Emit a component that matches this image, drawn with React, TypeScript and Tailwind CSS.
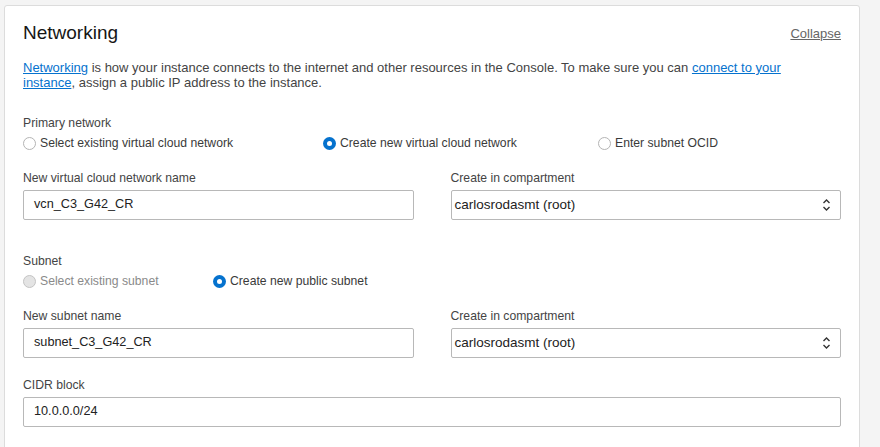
import React from 'react';

const font = { fontFamily: '"Liberation Sans", Arial, sans-serif' };

type Opt = { label: string; checked?: boolean; disabled?: boolean; w?: string };

const Radio = ({ label, checked, disabled, w }: Opt) => (
  <label className={`flex items-center gap-[4px] ${w ?? ''}`}>
    {checked ? (
      <span className="w-[13px] h-[13px] rounded-full bg-[#0572ce] flex items-center justify-center">
        <span className="w-[5px] h-[5px] rounded-full bg-white" />
      </span>
    ) : (
      <span
        className={`w-[13px] h-[13px] rounded-full border ${
          disabled ? 'border-[#c4c4c4] bg-[#e4e4e4]' : 'border-[#b4b4b4] bg-white'
        }`}
      />
    )}
    <span className={`text-[12.2px] leading-[15px] ${disabled ? 'text-[#8a8a8a]' : 'text-[#3a3a3a]'}`}>
      {label}
    </span>
  </label>
);

const Label = ({ children }: { children: React.ReactNode }) => (
  <div className="text-[12.2px] leading-[15px] text-[#444]">{children}</div>
);

const TextField = ({ label, value }: { label: string; value: string }) => (
  <div>
    <Label>{label}</Label>
    <div className="mt-[4px] h-[30px] border border-[#b8b8b8] rounded-[2px] bg-white flex items-center px-[10px] text-[12.7px] text-[#222]">
      {value}
    </div>
  </div>
);

const SelectField = ({ label, value }: { label: string; value: string }) => (
  <div>
    <Label>{label}</Label>
    <div className="mt-[4px] h-[30px] border border-[#b8b8b8] rounded-[2px] bg-white flex items-center justify-between pl-[3px] pr-[9px] text-[13.5px] text-[#222]">
      <span>{value}</span>
      <svg width="9" height="14" viewBox="0 0 9 14" fill="none" stroke="#333" strokeWidth="1.4">
        <path d="M1.5 5 L4.5 2 L7.5 5" />
        <path d="M1.5 9 L4.5 12 L7.5 9" />
      </svg>
    </div>
  </div>
);

export default function App() {
  return (
    <div className="min-h-screen bg-[#f4f4f4] pt-[5px] pl-[4px] pr-[20px]" style={font}>
      <div className="bg-white border border-[#dcdcdc] rounded-[3px] px-[18px] pt-[16px] pb-[40px]">
        <div className="flex justify-between items-start">
          <h2 className="text-[19px] leading-[22px] text-[#161616]">Networking</h2>
          <a className="text-[13px] leading-[15px] text-[#666] underline mt-[4px]">Collapse</a>
        </div>
        <p className="mt-[16px] max-w-[800px] text-[13px] leading-[15px] text-[#444]">
          <a className="text-[#0572ce] underline">Networking</a> is how your instance connects to the
          internet and other resources in the Console. To make sure you can{' '}
          <a className="text-[#0572ce] underline">connect to your instance</a>, assign a public IP
          address to the instance.
        </p>

        <div className="mt-[26px]">
          <Label>Primary network</Label>
          <div className="mt-[5px] flex items-center h-[15px]">
            <Radio label="Select existing virtual cloud network" w="w-[300px]" />
            <Radio label="Create new virtual cloud network" checked w="w-[275px]" />
            <Radio label="Enter subnet OCID" />
          </div>
        </div>

        <div className="mt-[20px] grid grid-cols-2 gap-x-[37px]">
          <TextField label="New virtual cloud network name" value="vcn_C3_G42_CR" />
          <SelectField label="Create in compartment" value="carlosrodasmt (root)" />
        </div>

        <div className="mt-[34px]">
          <Label>Subnet</Label>
          <div className="mt-[5px] flex items-center h-[15px]">
            <Radio label="Select existing subnet" disabled w="w-[190px]" />
            <Radio label="Create new public subnet" checked />
          </div>
        </div>

        <div className="mt-[20px] grid grid-cols-2 gap-x-[37px]">
          <TextField label="New subnet name" value="subnet_C3_G42_CR" />
          <SelectField label="Create in compartment" value="carlosrodasmt (root)" />
        </div>

        <div className="mt-[20px]">
          <TextField label="CIDR block" value="10.0.0.0/24" />
        </div>
      </div>
    </div>
  );
}
